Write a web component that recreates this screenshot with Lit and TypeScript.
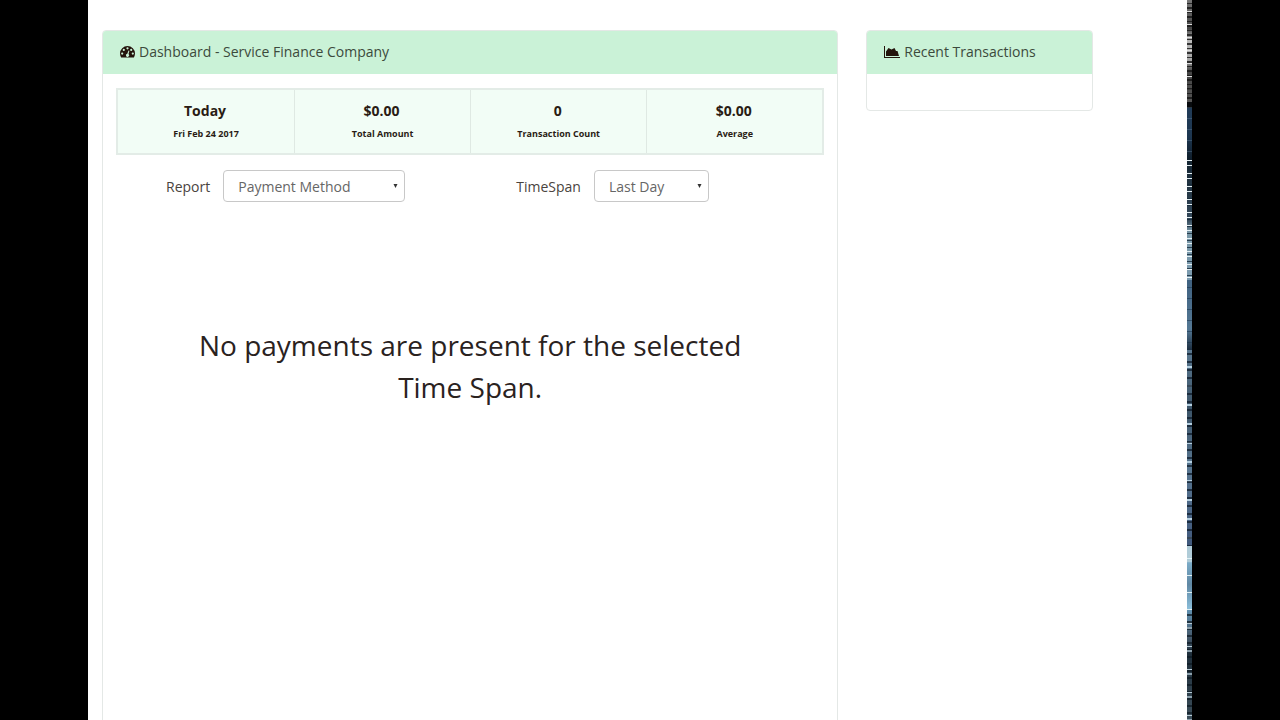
import { LitElement, html, css, svg } from "lit";
import { customElement, property } from "lit/decorators.js";

const base = css`
  * { box-sizing: border-box; }
`;

const gaugeIcon = svg`
  <path fill-rule="evenodd" d="M7.5 2A7.5 7.5 0 0 0 0 9.5c0 1.500.4 2.800 1.100 4h12.800c.7-1.200 1.100-2.500 1.100-4A7.500 7.500 0 0 0 7.500 2z
    M2.200 8.500a1.100 1.100 0 1 1 0 2.200 1.100 1.100 0 0 1 0-2.200z
    M3.800 4.800a1.100 1.100 0 1 1 0 2.200 1.100 1.100 0 0 1 0-2.200z
    M7.500 3.200a1.100 1.100 0 1 1 0 2.200 1.100 1.100 0 0 1 0-2.200z
    M11.200 4.800a1.100 1.100 0 1 1 0 2.200 1.100 1.100 0 0 1 0-2.200z
    M12.800 8.500a1.100 1.100 0 1 1 0 2.200 1.100 1.100 0 0 1 0-2.200z
    M8.500 6.500l.9.300-.9 3.200a1.600 1.600 0 1 1-1.200-.3z"/>`;

const areaIcon = svg`
  <path d="M0 2h1v11h15v1H0z"/>
  <path d="M2 12V7.500L4.500 4l3 1.500L10.500 4 12 7h1.500L15 12z"/>`;

@customElement("dash-panel")
class DashPanel extends LitElement {
  @property() heading = "";
  @property() icon = "gauge";

  static styles = [base, css`
    :host { display: block; border: 1px solid #e4e8e6; border-radius: 4px; background: #fff; }
    .head { display: flex; align-items: center; gap: 4px; padding: 11px 17px 12px;
      background: #caf2d7; border-radius: 3px 3px 0 0; }
    .title { margin: 0; font-size: 14px; line-height: 20px; font-weight: 400; color: #3c4a3c; white-space: nowrap; }
    .icon { flex: none; height: 16px; fill: #24140c; }
    .body { padding: 14px 13px; min-height: 36px; }
  `];

  render() {
    const gauge = this.icon === "gauge";
    return html`
      <header class="head">
        <svg class="icon" width=${gauge ? 15 : 16} viewBox=${gauge ? "0 0 15 16" : "0 0 16 16"} aria-hidden="true">
          ${gauge ? gaugeIcon : areaIcon}
        </svg>
        <h2 class="title">${this.heading}</h2>
      </header>
      <div class="body"><slot></slot></div>`;
  }
}

@customElement("app-root")
class AppRoot extends LitElement {
  stats = [
    { value: "Today", label: "Fri Feb 24 2017" },
    { value: "$0.00", label: "Total Amount" },
    { value: "0", label: "Transaction Count" },
    { value: "$0.00", label: "Average" },
  ];

  static styles = [base, css`
    :host { display: flex; height: 100vh; overflow: hidden; padding: 0 88px; background: #000;
      font-family: "Open Sans", "Noto Sans", sans-serif; color: #2a1c14; }
    .page { flex: 1; display: grid; grid-template-columns: repeat(4, minmax(0, 1fr)); gap: 28px;
      align-items: start; padding: 30px 94px 0 14px; background: #fff; }
    .main { grid-column: span 3; min-height: 100vh; }

    /* Thin streaked band: each stretch has its own tint and stripe rhythm. */
    .edge { flex: none; display: flex; flex-direction: column; width: 5px; margin-right: -1px; }
    .page + .edge { margin-right: 0; }
    .streak { min-height: 0; }
    .grey { flex: 102; background:
      repeating-linear-gradient(transparent 0 3px, rgba(20, 20, 20, .8) 3px 4px, transparent 4px 7px, rgba(20, 20, 20, .8) 7px 9px),
      repeating-linear-gradient(transparent 0 11px, #ddd 11px 12px, transparent 12px 13px),
      linear-gradient(#777, #444 28%, #bbb 40%, #aaa 58%, #444 70%, #555); }
    .navy { flex: 58; background:
      repeating-linear-gradient(transparent 0 5px, rgba(110, 140, 165, .35) 5px 6px, transparent 6px 11px),
      linear-gradient(#080b0e 10%, #213c58 11%, #1d3650 60%, #101e2b); }
    .bright { flex: 120; background:
      repeating-linear-gradient(#e4eff3 0 1px, transparent 1px 5px, #e4eff3 5px 6px, transparent 6px 13px),
      repeating-linear-gradient(transparent 0 3px, rgba(20, 40, 56, .8) 3px 4px, transparent 4px 7px),
      linear-gradient(#162632, #34495a 50%, #7896a6 60%, #7c9cb0); }
    .blue { flex: 70; background:
      repeating-linear-gradient(transparent 0 7px, rgba(20, 44, 68, .5) 7px 8px, transparent 8px 11px),
      linear-gradient(#3f6180, #547894 70%, #1d2f42); }
    .mixed { flex: 196; background:
      repeating-linear-gradient(transparent 0 3px, rgba(14, 28, 44, .75) 3px 5px, transparent 5px 8px),
      repeating-linear-gradient(transparent 0 16px, #b4cfe0 16px 18px, transparent 18px 19px),
      linear-gradient(#5a7890, #3c5468 30%, #587690 60%, #40587c); }
    .pale { flex: 64; background:
      repeating-linear-gradient(transparent 0 12px, #e0f0f4 12px 13px, transparent 13px 17px),
      linear-gradient(#b0ccd8 25%, #7cacc8 26%, #6088a4 60%, #8cc0dc); }
    .dark { flex: 110; background:
      repeating-linear-gradient(transparent 0 13px, #b8ccd6 13px 14px, transparent 14px 17px, #8ca0ac 17px 19px, transparent 19px 23px),
      repeating-linear-gradient(transparent 0 4px, rgba(12, 24, 34, .7) 4px 6px, transparent 6px 7px),
      linear-gradient(#6090b0, #44586a 25%, #1e2e3a 40%, #3c4e5a); }

    .stats { display: grid; grid-template-columns: repeat(4, 1fr); border: 2px solid #e3ece7; background: #f2fdf6; }
    .stat { display: flex; flex-direction: column; align-items: center; padding: 10px 0 7px; }
    .stat + .stat { border-left: 1px solid #dfe9e3; }
    .value { font-size: 14px; line-height: 22px; font-weight: 700; padding-right: 2px; }
    .label { font-size: 9px; line-height: 24px; font-weight: 700; }
    .filters { display: flex; gap: 111px; padding: 15px 0 0 50px; }
    .field { display: flex; align-items: center; gap: 13px; font-size: 14px; color: #4a443e; }
    .picker { position: relative; }
    .select { appearance: none; display: block; height: 32px; padding: 0 14px; border: 1px solid #c8c8c8;
      border-radius: 4px; background: #fff; font: inherit; color: #666; }
    .report { width: 182px; }
    .span { width: 115px; }
    .arrow { position: absolute; right: 7px; top: 14px; width: 5px; height: 4px; fill: #333; pointer-events: none; }
    .empty { margin: 122px auto 0; max-width: 600px; font-size: 28px; line-height: 42px; text-align: center; color: #2a221e; }
  `];

  arrow() {
    return html`<svg class="arrow" viewBox="0 0 5 5" aria-hidden="true"><path d="M0 0h5L2.500 5z"/></svg>`;
  }

  render() {
    return html`
      <main class="page">
        <dash-panel class="main" icon="gauge" heading="Dashboard - Service Finance Company">
          <div class="stats">
            ${this.stats.map((s) => html`
              <div class="stat"><span class="value">${s.value}</span><span class="label">${s.label}</span></div>`)}
          </div>
          <form class="filters">
            <div class="field">
              <label for="report">Report</label>
              <div class="picker">
                <select id="report" class="select report"><option>Payment Method</option></select>
                ${this.arrow()}
              </div>
            </div>
            <div class="field">
              <label for="span">TimeSpan</label>
              <div class="picker">
                <select id="span" class="select span"><option>Last Day</option></select>
                ${this.arrow()}
              </div>
            </div>
          </form>
          <p class="empty">No payments are present for the selected Time Span.</p>
        </dash-panel>
        <dash-panel icon="area" heading="Recent Transactions"></dash-panel>
      </main>
      <div class="edge" aria-hidden="true">
        ${["grey", "navy", "bright", "blue", "mixed", "pale", "dark"].map((tone) => html`<div class="streak ${tone}"></div>`)}
      </div>`;
  }
}
